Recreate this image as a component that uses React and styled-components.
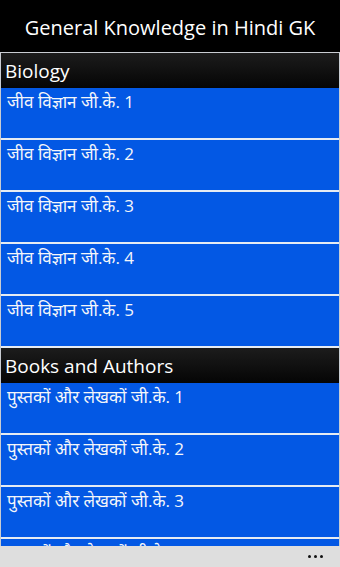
import React from 'react'
import styled, { createGlobalStyle } from 'styled-components'

const sections = [
  {
    title: 'Biology',
    items: ['जीव विज्ञान जी.के. 1', 'जीव विज्ञान जी.के. 2', 'जीव विज्ञान जी.के. 3', 'जीव विज्ञान जी.के. 4', 'जीव विज्ञान जी.के. 5'],
  },
  {
    title: 'Books and Authors',
    items: ['पुस्तकों और लेखकों जी.के. 1', 'पुस्तकों और लेखकों जी.के. 2', 'पुस्तकों और लेखकों जी.के. 3', 'पुस्तकों और लेखकों जी.के. 4'],
  },
]

function App() {
  return (
    <Screen>
      <GlobalStyle />
      <Header>General Knowledge in Hindi GK</Header>
      <List>
        {sections.map((s) => (
          <React.Fragment key={s.title}>
            <SectionHeader>{s.title}</SectionHeader>
            {s.items.map((item) => (
              <Item key={item}>{item}</Item>
            ))}
          </React.Fragment>
        ))}
      </List>
      <AppBar>
        <Dots>
          <Dot />
          <Dot />
          <Dot />
        </Dots>
      </AppBar>
    </Screen>
  )
}

export default App

// Style section

const GlobalStyle = createGlobalStyle`
  html, body {
    margin: 0;
    padding: 0;
    background: #000;
  }
  * {
    box-sizing: border-box;
  }
`

const Screen = styled.div`
  height: 100vh;
  display: flex;
  flex-direction: column;
  font-family: "Open Sans", "Noto Sans", sans-serif;
  color: #fff;
  overflow: hidden;
`

const Header = styled.div`
  height: 52px;
  flex-shrink: 0;
  background: #000;
  display: flex;
  align-items: center;
  justify-content: center;
  font-size: 20px;
  padding-top: 2px;
`

const List = styled.div`
  flex: 1;
  overflow: hidden;
  background: #e6ecf3;
  border: 1px solid #c9ccd2;
  border-bottom: none;
`

const SectionHeader = styled.div`
  height: 35px;
  background: linear-gradient(#1c1c1c, #050505);
  font-size: 19px;
  padding-left: 4px;
  display: flex;
  align-items: center;
`

const Item = styled.div`
  height: 50px;
  margin-bottom: 2px;
  background: #0358e4;
  color: #f4f6fa;
  font-size: 17px;
  padding: 2px 6px;
`

const AppBar = styled.div`
  height: 21px;
  flex-shrink: 0;
  background: #dedede;
  display: flex;
  justify-content: flex-end;
  align-items: center;
  padding-right: 17px;
`

const Dots = styled.div`
  display: flex;
  gap: 3px;
`

const Dot = styled.span`
  width: 3px;
  height: 3px;
  border-radius: 50%;
  background: #111;
`
